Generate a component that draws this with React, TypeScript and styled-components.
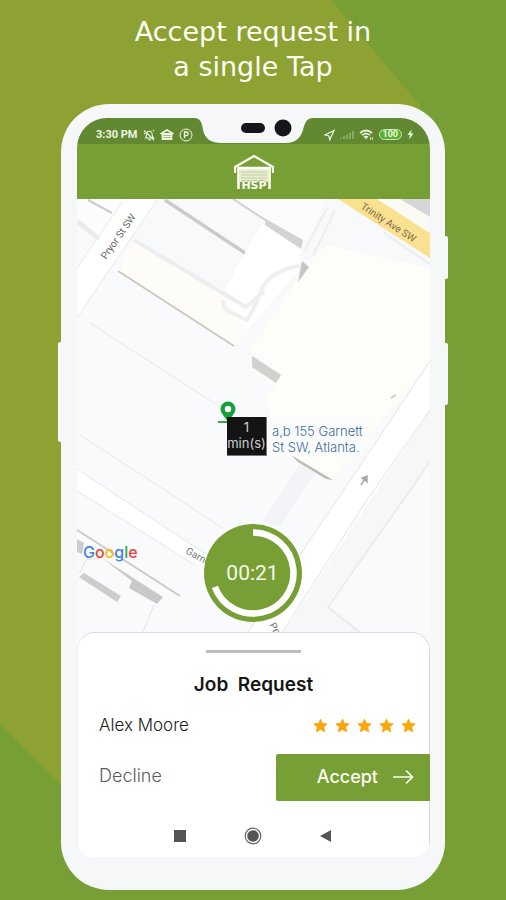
import React from "react";
import styled, { createGlobalStyle } from "styled-components";

const green = "#789f35";
const olive = "#8ea133";
const bezel = "#f5f7f9";

const GlobalStyle = createGlobalStyle`
  *, *::before, *::after { box-sizing: border-box; }
  body { margin: 0; background: ${green}; font-family: Inter, "Open Sans", sans-serif; }
  button { font: inherit; border: 0; background: none; padding: 0; cursor: pointer; }
`;

const Page = styled.main`
  position: relative;
  isolation: isolate;
  min-height: 100vh;
  padding: 14px 61px 9px;
  background: ${green};
  &::before {
    content: "";
    position: absolute;
    inset: 0;
    z-index: -1;
    background: ${olive};
    clip-path: polygon(0 0, 65.4% 0, 83% 11.7%, 83% 50%, 50% 95%, 12.5% 87.4%, 0 80.5%);
  }
`;

const Headline = styled.h1`
  margin: 0;
  text-align: center;
  font: 400 27px/35px "DejaVu Sans", Verdana, sans-serif;
  color: #fdfff5;
`;

const Phone = styled.section`
  position: relative;
  margin-top: 20px;
  padding: 14px 15px 33px 16px;
  border-radius: 48px;
  background: ${bezel};
`;

const SideKey = styled.span<{ $side: "left" | "right"; $top: number; $length: number }>`
  position: absolute;
  ${(p) => p.$side}: -3px;
  top: ${(p) => p.$top}px;
  width: 6px;
  height: ${(p) => p.$length}px;
  border-radius: 2px;
  background: ${bezel};
`;

const Screen = styled.div`
  display: flex;
  flex-direction: column;
  overflow: hidden;
  border-radius: 30px 30px 16px 16px;
  background: #fff;
`;

const StatusBar = styled.div`
  position: relative;
  display: flex;
  justify-content: space-between;
  align-items: center;
  height: 26px;
  padding: 7px 16px 0 19px;
  background: #628831;
  color: #eef5e2;
`;

const StatusGroup = styled.div`
  display: flex;
  align-items: center;
  gap: 5px;
  font: 700 11px/14px Roboto, sans-serif;
`;

const Notch = styled.svg`
  position: absolute;
  left: 50%;
  top: 0;
  width: 120px;
  height: 26px;
  margin-left: -59px;
`;

const AppBar = styled.header`
  display: flex;
  justify-content: center;
  align-items: center;
  height: 55px;
  background: ${green};
`;

const MapArea = styled.div`
  position: relative;
  height: 449px;
  background: #f9fafb;
`;

const MapDrawing = styled.svg`
  display: block;
  width: 100%;
  height: 100%;
  font: 10px Roboto, sans-serif;
`;

const Pickup = styled.div`
  position: absolute;
  left: 150px;
  top: 218px;
  display: flex;
  background: linear-gradient(90deg, #fafbfb 90%, transparent);
`;

const PinIcon = styled.svg`
  position: absolute;
  left: 140px;
  top: 202px;
  width: 20px;
  height: 24px;
`;

const Eta = styled.div`
  width: 40px;
  height: 39px;
  padding-top: 2px;
  background: #141414;
  border: 1px solid #777;
  border-width: 0 1px 1px 0;
  color: #cfcfcf;
  font-size: 13px;
  line-height: 16px;
  text-align: center;
`;

const Address = styled.address`
  padding: 6px 12px 0 5px;
  font: 300 13px/16px Inter, sans-serif;
  color: #3f6c98;
`;

const MapBrand = styled.a`
  position: absolute;
  left: 6px;
  top: 343px;
  font: 500 16px/20px Inter, sans-serif;
  text-decoration: none;
`;

const BrandLetter = styled.span<{ $color: string }>`
  color: ${(p) => p.$color};
`;

const Timer = styled.div`
  position: absolute;
  left: 50%;
  top: 325px;
  width: 98px;
  height: 98px;
  margin-left: -50px;
  display: grid;
  place-items: center;
  border-radius: 50%;
  background: ${green};
  color: #f2f8e6;
  font: 400 21px/26px Roboto, sans-serif;
`;

const TimerRing = styled.svg`
  position: absolute;
  inset: 0;
`;

const Sheet = styled.section`
  position: relative;
  margin-top: -16px;
  padding-top: 17px;
  border: 1px solid #d9dbdd;
  border-bottom: 0;
  border-left-color: #eceef0;
  border-radius: 18px 18px 0 0;
  background: #fff;
`;

const Handle = styled.div`
  width: 95px;
  height: 3px;
  margin: 0 auto;
  background: #bdbdbd;
`;

const SheetTitle = styled.h2`
  margin: 19px 0 0;
  text-align: center;
  white-space: pre;
  font-size: 19px;
  line-height: 26px;
  font-weight: 600;
  color: #161616;
`;

const CustomerRow = styled.div`
  display: flex;
  justify-content: space-between;
  align-items: center;
  margin-top: 14px;
  padding: 0 13px 0 21px;
  line-height: 26px;
  font-size: 17px;
  font-weight: 300;
  color: #222;
`;

const Stars = styled.div`
  display: flex;
  gap: 7px;
`;

const Actions = styled.div`
  display: flex;
  justify-content: space-between;
  align-items: center;
  margin: 16px -1px 0 0;
  padding-left: 21px;
`;

const DeclineButton = styled.button`
  padding-bottom: 4px;
  font-size: 18px;
  font-weight: 300;
  line-height: 26px;
  color: #5c5c5c;
`;

const AcceptButton = styled.button`
  display: flex;
  justify-content: flex-end;
  align-items: center;
  gap: 14px;
  width: 154px;
  height: 47px;
  padding: 0 16px 2px 0;
  border-radius: 2px 0 0 2px;
  background: ${green};
  color: #fbfff0;
  font-size: 18px;
  font-weight: 500;
`;

const SystemNav = styled.nav`
  display: flex;
  justify-content: center;
  align-items: center;
  gap: 53px;
  height: 56px;
  padding: 14px 2px 0 0;
`;

const NavButton = styled.button`
  display: grid;
  place-items: center;
  width: 20px;
  height: 20px;
`;

const brand: [string, string][] = [
  ["G", "#4285f4"],
  ["o", "#ea4335"],
  ["o", "#fbbc05"],
  ["g", "#4285f4"],
  ["l", "#34a853"],
  ["e", "#ea4335"],
];

function StreetMap() {
  return (
    <MapDrawing viewBox="77 199 353 449" preserveAspectRatio="xMidYMid slice" role="img" aria-label="Street map">
      <rect x="-200" y="199" width="900" height="449" fill="#f9fafb" />
      <path d="M157 199L430 199V268L327 245 300 290 247 309 133 240Z" fill="#f7f9fb" />
      <path d="M233 199L265 220 303 245 327 199Z" fill="#fbfcfb" />
      <path d="M90 199H123L98 238 77 222V199Z" fill="#fcfcfc" />
      <path d="M262 224L302 246 298 270 252 325 232 345 223 300 245 307 225 290 245 253Z" fill="#fff" />
      <path d="M123 199L157 199 77 318V268Z" fill="#fff" />
      <path d="M123 201L77 268M157 200L77 318" stroke="#e6e7e8" fill="none" />
      <path d="M77 221L99 239" stroke="#e9ebed" strokeWidth="5" />
      <path d="M88 200L112 213" stroke="#cbcccc" strokeWidth="2" />
      <path d="M133 240L223 293 247 330 235 346 118 272Z" fill="#fdfcf8" />
      <path d="M118 271L234 346" stroke="#c9c6c2" strokeWidth="1.6" />
      <path d="M165 200L245 253" stroke="#c9cbcb" strokeWidth="3.4" />
      <path d="M233 199L267 221" stroke="#cfd0cf" strokeWidth="2" />
      <path d="M134 240L246 307 264 292" fill="none" stroke="#eceef0" strokeWidth="4" />
      <path d="M223 300Q222 309 232 313L247 320Q255 308 263 286 275 269 300 266" fill="none" stroke="#eeeff1" strokeWidth="4" />
      <path d="M327 208L305 250M335 210L313 256" stroke="#eceef1" strokeWidth="2" />
      <path d="M309 262L327 245 430 268V361L333 480 275 450 268 395 283 375 250 350 280 305Z" fill="#fdfdf9" />
      <path d="M266 219L303 240 301 249 265 225Z" fill="#d4d3d1" />
      <path d="M302 261L309 267 298 282Z" fill="#c5c5c3" />
      <path d="M252 356L281 375 276 383 252 367Z" fill="#d3d1cd" />
      <path d="M338 199H377L430 233V258Z" fill="#f9e190" />
      <path d="M377 199H400L430 217V233Z" fill="#fcfaf4" />
      <path d="M400 199H430V217Z" fill="#d4d6d8" />
      <path d="M384 233L430 264" stroke="#ebedf0" strokeWidth="2" />
      <path d="M90 323L217 405M80 435L223 528" fill="none" stroke="#e5e6e6" />
      <path d="M300 464L316 471 280 526 262 522Z" fill="#f3f4f7" />
      <path d="M291 455L333 480 326 479 298 462Z" fill="#bfbcb8" />
      <path d="M77 470L215 561V574L190 561 77 490Z" fill="#fff" />
      <path d="M77 469L215 560M77 491L195 565" stroke="#e8e9eb" fill="none" />
      <path d="M430 410V462L328 607 362 634H281Z" fill="#f6f7f9" />
      <path d="M430 361V410L282 634 270 648H238L248 632 337 500Z" fill="#fff" />
      <path d="M430 361L337 500 248 632M430 410L367 500 281 634" fill="none" stroke="#e3e4e5" />
      <path d="M430 462L328 607 362 634" fill="none" stroke="#e9eaea" strokeWidth="1.6" />
      <path d="M77 530L180 596" stroke="#c8c9c9" strokeWidth="1.8" />
      <path d="M102 558L163 597 157 604 129 588 132 581Z" fill="#c8c9c9" />
      <path d="M84 573L121 596 117 602 79 577Z" fill="#cccdcd" />
      <path d="M77 539L84 543 82 554 77 552Z" fill="#cccdcd" />
      <path d="M154 605L142 634M79 574L86 560 102 558" fill="none" stroke="#e3e4e5" />
      <path d="M361 485L366 477M362 478L367 476 367 482Z" stroke="#aaa" strokeWidth="1.5" fill="#aaa" />
      <path d="M391 398L396 395" stroke="#ccc" strokeWidth="2" />
      <text transform="translate(106 260) rotate(-55)" fill="#666">Pryor St SW</text>
      <text transform="translate(360 208) rotate(33)" fill="#7b6849">Trinity Ave SW</text>
      <text transform="translate(185 553) rotate(29)" fill="#777">Garnett</text>
      <text transform="translate(269 625) rotate(60)" fill="#666">Pryor</text>
    </MapDrawing>
  );
}

function StatusLeftIcons() {
  return (
    <>
      <svg width="12" height="12" viewBox="0 0 12 12" fill="none" stroke="currentColor" strokeWidth="1.1">
        <path d="M2.5 9C4 7 2.7 4.8 4.3 3 6 1.5 8.8 2.2 9 4.5 9.1 6.2 9 7.5 10.5 9ZM5 10.8H8M1 1.5L11 11M1 5L2 4M10 2L11 1" />
      </svg>
      <svg width="14" height="12" viewBox="0 0 14 12">
        <path d="M0.5 5L7 1 13.5 5M2.5 5V11M11.5 5V11" fill="none" stroke="currentColor" strokeWidth="1.6" />
        <path d="M3 4H11V6.5H3ZM3 7H11V8.5H3ZM3 9H11V11H3Z" fill="currentColor" />
      </svg>
      <svg width="14" height="14" viewBox="0 0 14 14" fill="none" stroke="currentColor">
        <circle cx="7" cy="7" r="6" />
        <path d="M5.5 10.3V4H7.4A1.8 1.8 0 0 1 7.4 7.6H5.5" strokeWidth="1.3" />
      </svg>
    </>
  );
}

const Battery = styled.span`
  padding: 0 3px;
  border: 1px solid #cfe5b4;
  border-radius: 6px;
  background: #57b12f;
  font-size: 9px;
  line-height: 9px;
`;

function StatusRightIcons() {
  return (
    <>
      <svg width="11" height="12" viewBox="0 0 11 12" fill="none" stroke="currentColor" strokeWidth="1.2">
        <path d="M10 1.5L1 6 4.8 7 5.8 10.8Z" />
      </svg>
      <svg width="14" height="10" viewBox="0 0 14 10" fill="#8aa768">
        <path d="M0 9H2V7.5H0ZM3 9H5V6H3ZM6 9H8V4.5H6ZM9 9H11V3H9ZM12 9H14V1H12Z" />
      </svg>
      <svg width="15" height="12" viewBox="0 0 15 12" fill="none" stroke="currentColor" strokeWidth="1.7">
        <path d="M1 4Q7 -1 13 4M3 6.2Q7 3 11 6.2M5 8.2Q7 6.8 9 8.2" />
        <path d="M5.5 8.5H8.5L7 10.5Z" fill="currentColor" stroke="none" />
        <path d="M11.5 8V11M13.5 8V11" strokeWidth="0.8" />
      </svg>
      <Battery>100</Battery>
      <svg width="7" height="11" viewBox="0 0 7 11" fill="currentColor">
        <path d="M4.5 0.5L0.5 6H3L2 10.5 6.5 4.5H4Z" />
      </svg>
    </>
  );
}

function GarageLogo() {
  return (
    <svg width="40" height="36" viewBox="0 0 40 36" role="img" aria-label="HSP">
      <path d="M1 19V13L20 2 39 13V19" fill="none" stroke="#fdfff5" strokeWidth="2.2" />
      <path d="M6 14H34V28H6Z" fill="#e6edd3" />
      <path d="M7 18H33M7 21H33M7 24H33" stroke="#c3d3a4" />
      <path d="M4.5 35V14H35.5V35" fill="none" stroke="#fdfff5" strokeWidth="2.6" />
      <text
        x="20"
        y="35"
        textAnchor="middle"
        fill="#fdfff5"
        stroke={green}
        strokeWidth="1"
        paintOrder="stroke"
        fontFamily="DejaVu Sans, sans-serif"
        fontWeight="700"
        fontSize="11"
      >
        HSP
      </text>
    </svg>
  );
}

export default function App() {
  return (
    <>
      <GlobalStyle />
      <Page>
        <Headline>
          Accept request in
          <br />a single Tap
        </Headline>
        <Phone>
          <SideKey $side="left" $top={238} $length={100} />
          <SideKey $side="right" $top={132} $length={43} />
          <SideKey $side="right" $top={239} $length={62} />
          <Screen>
            <StatusBar>
              <StatusGroup>
                3:30 PM
                <StatusLeftIcons />
              </StatusGroup>
              <Notch viewBox="0 0 120 26">
                <path d="M0 0C6 1 7 5 8 12C10 21 16 25 27 25H91C101 25 106 19 108 12C110 4 112 0 118 0Z" fill={bezel} />
                <rect x="46" y="5" width="24" height="10" rx="5" fill="#15171a" />
                <circle cx="88" cy="10" r="8.5" fill="#15171a" />
              </Notch>
              <StatusGroup>
                <StatusRightIcons />
              </StatusGroup>
            </StatusBar>
            <AppBar>
              <GarageLogo />
            </AppBar>
            <MapArea>
              <StreetMap />
              <PinIcon viewBox="0 0 20 24">
                <path d="M1 21H10" stroke="#3aa455" strokeWidth="2" />
                <path d="M11 0.5A7.5 7.5 0 0 1 18.5 8C18.5 13 13 16 11 22C9 16 3.500 13 3.500 8A7.5 7.5 0 0 1 11 0.5Z" fill="#16a03a" />
                <circle cx="11" cy="8" r="3.2" fill="#fff" />
              </PinIcon>
              <Pickup>
                <Eta>
                  1<br />
                  min(s)
                </Eta>
                <Address>
                  a,b 155 Garnett
                  <br />
                  St SW, Atlanta.
                </Address>
              </Pickup>
              <MapBrand href="#map" aria-label="Google">
                {brand.map(([letter, color], i) => (
                  <BrandLetter key={i} $color={color}>
                    {letter}
                  </BrandLetter>
                ))}
              </MapBrand>
              <Timer role="timer">
                <TimerRing viewBox="0 0 98 98">
                  <path d="M49 8.5A40.5 40.5 0 1 1 10.9 62.8" fill="none" stroke="#fff" strokeWidth="6.5" />
                </TimerRing>
                00:21
              </Timer>
            </MapArea>
            <Sheet>
              <Handle />
              <SheetTitle>{"Job  Request"}</SheetTitle>
              <CustomerRow>
                Alex Moore
                <Stars role="img" aria-label="5 stars">
                  {[1, 2, 3, 4, 5].map((n) => (
                    <svg
                      key={n}
                      width="15"
                      height="15"
                      viewBox="0 0 24 24"
                      fill="#fba60a"
                      stroke="#fba60a"
                      strokeWidth="1.5"
                      strokeLinejoin="round"
                    >
                      <path d="M12 2L15 8.7 22.5 9.5 17 14.5 18.6 22 12 18.2 5.4 22 7 14.5 1.5 9.5 9 8.7Z" />
                    </svg>
                  ))}
                </Stars>
              </CustomerRow>
              <Actions>
                <DeclineButton type="button">Decline</DeclineButton>
                <AcceptButton type="button">
                  Accept
                  <svg width="22" height="16" viewBox="0 0 22 16" fill="none" stroke="currentColor" strokeWidth="1.7">
                    <path d="M1 8H20M14 1.5L20.5 8 14 14.5" />
                  </svg>
                </AcceptButton>
              </Actions>
              <SystemNav>
                <NavButton type="button" aria-label="Recent apps">
                  <svg width="12" height="12">
                    <rect width="12" height="12" fill="#555" />
                  </svg>
                </NavButton>
                <NavButton type="button" aria-label="Home">
                  <svg width="18" height="18" viewBox="0 0 18 18">
                    <circle cx="9" cy="9" r="7.8" fill="none" stroke="#666" strokeWidth="1.2" />
                    <circle cx="9" cy="9" r="5.8" fill="#555" />
                  </svg>
                </NavButton>
                <NavButton type="button" aria-label="Back">
                  <svg width="12" height="12">
                    <path d="M0 6L11 0V12Z" fill="#555" />
                  </svg>
                </NavButton>
              </SystemNav>
            </Sheet>
          </Screen>
        </Phone>
      </Page>
    </>
  );
}
